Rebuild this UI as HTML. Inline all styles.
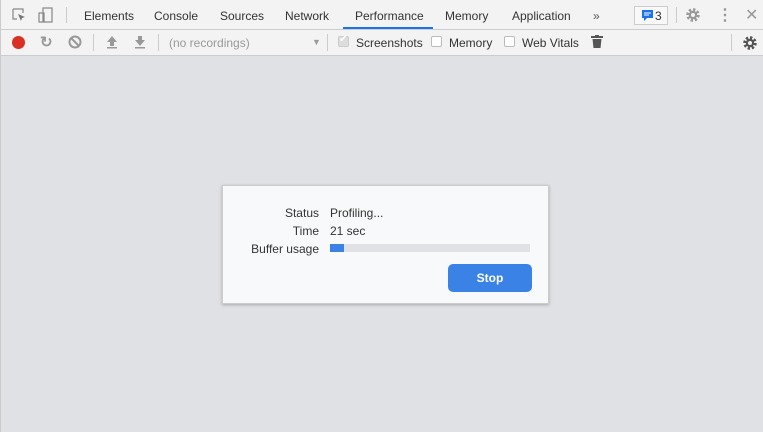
<!DOCTYPE html>
<html><head><style>
*{margin:0;padding:0;box-sizing:border-box}
body{width:763px;height:432px;background:#dfe1e5;font-family:"Liberation Sans",sans-serif;font-size:12px;color:#333;position:relative;overflow:hidden;border-left:1px solid #ccc}
.bar1{position:absolute;left:0;top:0;width:763px;height:30px;background:#f3f3f3;border-bottom:1px solid #cbcdd1}
.bar2{position:absolute;left:0;top:30px;width:763px;height:26px;background:#f3f3f3;border-bottom:1px solid #cbcdd1}
.t{position:absolute;top:9px;color:#333;font-size:12px}
.sep{position:absolute;width:1px;background:#ccc}
.g{position:absolute;top:7px;color:#999;font-size:12px}
.cb{position:absolute;top:36px;width:11px;height:11px;border:1px solid #bbb;background:#fff;border-radius:2px}
</style></head><body>
<div class="bar1">
<svg style="position:absolute;left:11px;top:8px" width="14" height="14"><path d="M1 1h10v4M1 1v10h4" fill="none" stroke="#888" stroke-width="1.2"/><path d="M6 6l7 3-3 1-1 3z" fill="#777"/></svg>
<svg style="position:absolute;left:37px;top:7px" width="16" height="16"><rect x="5" y="1" width="9" height="14" fill="none" stroke="#888" stroke-width="1.2"/><rect x="1" y="6" width="5" height="9" fill="none" stroke="#888" stroke-width="1.2"/></svg>
<div class="sep" style="left:65px;top:7px;height:16px"></div>
<span class="t" style="left:83px">Elements</span>
<span class="t" style="left:153px">Console</span>
<span class="t" style="left:219px">Sources</span>
<span class="t" style="left:284px">Network</span>
<span class="t" style="left:354px">Performance</span>
<div style="position:absolute;left:342px;top:27px;width:90px;height:2px;background:#1a73e8"></div>
<span class="t" style="left:444px">Memory</span>
<span class="t" style="left:511px">Application</span>
<span class="t" style="left:592px;color:#555">»</span>
<div style="position:absolute;left:633px;top:6px;width:34px;height:19px;border:1px solid #ccc;background:#f8f8f8"></div>
<svg style="position:absolute;left:641px;top:10px" width="11" height="12"><path d="M0 0h11v8H5l-3 3V8H0z" fill="#1a73e8"/><path d="M2 3h7M2 5h5" stroke="#fff"/></svg>
<span class="t" style="left:654px;top:9px">3</span>
<div class="sep" style="left:675px;top:7px;height:16px"></div>
<svg style="position:absolute;left:684px;top:7px" width="16" height="16"><circle cx="8" cy="8" r="5" fill="none" stroke="#999" stroke-width="3.5" stroke-dasharray="2.2 1.7"/><circle cx="8" cy="8" r="4.2" fill="#999"/><circle cx="8" cy="8" r="2" fill="#f3f3f3"/></svg>
<span style="position:absolute;left:716px;top:5px;font-size:16px;color:#999;font-weight:bold">⋮</span>
<span style="position:absolute;left:744px;top:5px;font-size:16px;color:#999">✕</span>
</div>
<div class="bar2">
<div style="position:absolute;left:11px;top:6px;width:13px;height:13px;border-radius:50%;background:#d93025"></div>
<span style="position:absolute;left:39px;top:3px;font-size:15px;color:#999;font-weight:bold">↻</span>
<svg style="position:absolute;left:67px;top:5px" width="14" height="14"><circle cx="7" cy="7" r="5.5" fill="none" stroke="#999" stroke-width="2"/><path d="M3 3l8 8" stroke="#999" stroke-width="2"/></svg>
<div class="sep" style="left:92px;top:4px;height:17px"></div>
<svg style="position:absolute;left:105px;top:5px" width="12" height="14"><path d="M6 1l5 6H8v4H4V7H1z" fill="#999"/><rect x="1" y="12" width="10" height="1.5" fill="#999"/></svg>
<svg style="position:absolute;left:133px;top:5px" width="12" height="14"><path d="M6 11l5-6H8V1H4v4H1z" fill="#999"/><rect x="1" y="12" width="10" height="1.5" fill="#999"/></svg>
<div class="sep" style="left:157px;top:4px;height:17px"></div>
<span class="g" style="left:168px;top:6px">(no recordings)</span>
<span style="position:absolute;left:311px;top:7px;font-size:9px;color:#999">▼</span>
<div class="sep" style="left:326px;top:4px;height:17px"></div>
<div class="cb" style="left:337px;top:6px;background:#ddd;border-color:#ccc"></div>
<span style="position:absolute;left:338px;top:4px;font-size:10px;color:#fff">✔</span>
<span class="t" style="left:355px;top:6px">Screenshots</span>
<div class="cb" style="left:430px;top:6px"></div>
<span class="t" style="left:448px;top:6px">Memory</span>
<div class="cb" style="left:503px;top:6px"></div>
<span class="t" style="left:521px;top:6px">Web Vitals</span>
<svg style="position:absolute;left:590px;top:5px" width="12" height="14"><rect x="0" y="1" width="12" height="2" fill="#555"/><rect x="4" y="0" width="4" height="2" fill="#555"/><path d="M1.5 4h9l-1 9h-7z" fill="#555"/></svg>
<div class="sep" style="left:730px;top:4px;height:17px"></div>
<svg style="position:absolute;left:741px;top:5px" width="16" height="16"><circle cx="8" cy="8" r="5" fill="none" stroke="#555" stroke-width="3.5" stroke-dasharray="2.2 1.7"/><circle cx="8" cy="8" r="4.2" fill="#555"/><circle cx="8" cy="8" r="2" fill="#f3f3f3"/></svg>
</div>
<div style="position:absolute;left:221px;top:185px;width:327px;height:119px;background:#f8f9fa;border:1px solid #ccc;box-shadow:0 1px 3px rgba(0,0,0,.25)">
<span style="position:absolute;right:229px;top:20px">Status</span>
<span style="position:absolute;left:107px;top:20px">Profiling...</span>
<span style="position:absolute;right:229px;top:38px">Time</span>
<span style="position:absolute;left:107px;top:38px">21 sec</span>
<span style="position:absolute;right:229px;top:56px">Buffer usage</span>
<div style="position:absolute;left:107px;top:58px;width:200px;height:8px;background:#dfe1e5"><div style="width:14px;height:8px;background:#3b82e6"></div></div>
<div style="position:absolute;left:225px;top:78px;width:84px;height:28px;border-radius:5px;background:#3b82e6;color:#fff;font-weight:bold;text-align:center;line-height:28px">Stop</div>
</div>
</body></html>
